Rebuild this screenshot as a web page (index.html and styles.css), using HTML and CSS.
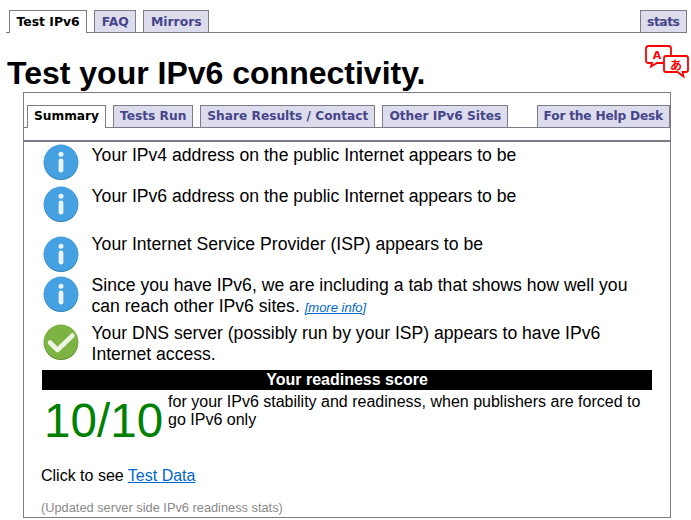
FILE: index.html
```html
<!DOCTYPE html>
<html lang="en">
<head>
<meta charset="utf-8">
<title>Test your IPv6 connectivity.</title>
<link rel="stylesheet" href="styles.css">
</head>
<body>
<svg class="defs" width="0" height="0" aria-hidden="true">
  <defs>
    <symbol id="info" viewBox="0 0 36 36">
      <circle cx="18" cy="18.6" r="17.4" fill="#2f7fb5"/>
      <circle cx="18" cy="17.8" r="17.2" fill="#45a1e2"/>
      <circle cx="18" cy="10.2" r="2.5" fill="#e8f3fb"/>
      <rect x="15.6" y="14.6" width="4.8" height="14" rx="2.4" fill="#e8f3fb"/>
    </symbol>
    <symbol id="check" viewBox="0 0 36 36">
      <circle cx="18" cy="18.6" r="17.4" fill="#5f8f2c"/>
      <circle cx="18" cy="17.8" r="17.2" fill="#7cb342"/>
      <path d="M7 18.5l7.5 7.5L29.5 11.5" fill="none" stroke="#eef5e4" stroke-width="4.6" stroke-linecap="round" stroke-linejoin="round"/>
    </symbol>
  </defs>
</svg>

<nav class="tabs tabs-top">
  <a class="tab active">Test IPv6</a>
  <a class="tab">FAQ</a>
  <a class="tab">Mirrors</a>
  <a class="tab tab-end">stats</a>
</nav>

<h1 class="title">Test your IPv6 connectivity.</h1>

<svg class="translate" viewBox="0 0 44 33" width="44" height="33" aria-hidden="true">
  <path d="M3.5 1h20q2.500 0 2.500 2.500v12q0 2.500-2.500 2.500H12l-6 3.500 1-3.500H3.500Q1 18 1 15.500v-12Q1 1 3.500 1z" fill="#fff" stroke="#f00" stroke-width="1.800"/>
  <path d="M21 11h20q2 0 2 2v12q0 2-2 2h-3.500l1 4.500-6-4.500H21q-2 0-2-2V13q0-2 2-2z" fill="#fff" stroke="#f00" stroke-width="1.800"/>
  <text x="12" y="13.500" class="glyph-a">A</text>
  <text x="31" y="24.500" class="glyph-b">あ</text>
</svg>

<main class="panel">
  <nav class="tabs tabs-inner">
    <a class="tab active">Summary</a>
    <a class="tab">Tests Run</a>
    <a class="tab">Share Results / Contact</a>
    <a class="tab">Other IPv6 Sites</a>
    <a class="tab tab-end">For the Help Desk</a>
  </nav>
  <div class="rule"></div>

  <section class="rows">
    <div class="row row-a"><svg class="icon"><use href="#info"/></svg><p>Your IPv4 address on the public Internet appears to be</p></div>
    <div class="row row-b"><svg class="icon"><use href="#info"/></svg><p>Your IPv6 address on the public Internet appears to be</p></div>
    <div class="row row-c"><svg class="icon"><use href="#info"/></svg><p>Your Internet Service Provider (ISP) appears to be</p></div>
    <div class="row row-d"><svg class="icon"><use href="#info"/></svg><p>Since you have IPv6, we are including a tab that shows how well you can reach other IPv6 sites. <a class="more">[more info]</a></p></div>
    <div class="row row-e"><svg class="icon"><use href="#check"/></svg><p>Your DNS server (possibly run by your ISP) appears to have IPv6 Internet access.</p></div>
  </section>

  <div class="score-head">Your readiness score</div>
  <div class="score">
    <div class="score-num">10/10</div>
    <p class="score-text">for your IPv6 stability and readiness, when publishers are forced to go IPv6 only</p>
  </div>

  <p class="click">Click to see <a class="link">Test Data</a></p>
  <p class="updated">(Updated server side IPv6 readiness stats)</p>
</main>
</body>
</html>
```
FILE: styles.css
```css
html, body {
  margin: 0;
  padding: 0;
  height: 520px;
  overflow: hidden;
  background: #fff;
  color: #000;
  font-family: "Liberation Sans", Arial, sans-serif;
}
.defs { position: absolute; }

.tabs {
  display: flex;
  align-items: flex-end;
  border-bottom: 1px solid #7b7b8a;
  font-family: "DejaVu Sans", Verdana, sans-serif;
  font-weight: bold;
}
.tabs-top {
  height: 22px;
  margin: 10px 4px 0 6px;
  padding-left: 3px;
  gap: 7px;
  font-size: 12.4px;
}
.tabs-inner {
  height: 22px;
  margin-top: 12px;
  padding-left: 3px;
  gap: 7px;
  font-size: 12.2px;
}
.tab {
  box-sizing: border-box;
  height: 23px;
  line-height: 21px;
  padding: 0 6px;
  background: #dddcec;
  border: 1px solid #7b7b8a;
  color: #45458a;
  white-space: nowrap;
  margin-bottom: -1px;
}
.tabs-top .tab {
  padding: 0 6.5px;
  line-height: 22px;
}
.tab.active {
  height: 23px;
  margin-bottom: -1px;
  background: #fff;
  border-bottom: 0;
  color: #000;
}
.tab-end {
  margin-left: auto;
  letter-spacing: -0.2px;
}
.tabs-top .tab-end { letter-spacing: -0.5px; }

.title {
  margin: 22px 0 0 7px;
  font-size: 32px;
  line-height: 37px;
  font-weight: bold;
}
.translate {
  position: absolute;
  left: 645px;
  top: 45px;
}
.glyph-a { font: bold 11px "DejaVu Sans", sans-serif; fill: #f00; text-anchor: middle; }
.glyph-b { font: bold 12px "Noto Sans CJK JP", sans-serif; fill: #f00; text-anchor: middle; }

.panel {
  box-sizing: border-box;
  width: 648px;
  height: 426px;
  margin: 0 0 0 23px;
  border: 1px solid #7b7b8a;
  overflow: hidden;
}
.rule {
  height: 2px;
  margin-top: 12px;
  background: #7b7b8a;
}
.rows { padding: 2px 0 0 19px; }
.row { display: flex; gap: 12.5px; }
.row p {
  margin: -1px 0 0;
  width: 560px;
  font-size: 17.6px;
  line-height: 21px;
}
.row-a { height: 42px; }
.row-a p { padding-top: 2px; }
.row-b { height: 50px; }
.row-b p { padding-top: 1px; }
.row-c { height: 40px; }
.row-c p { margin-top: -2px; }
.row-d { height: 48px; }
.row-e { height: 46px; }
.icon { width: 36px; height: 36px; flex: none; }
.more {
  font-size: 13px;
  font-style: italic;
  color: #0066cc;
  text-decoration: underline;
}

.score-head {
  margin: 0 18px;
  height: 20px;
  line-height: 20px;
  background: #000;
  color: #fff;
  font-size: 16px;
  font-weight: bold;
  text-align: center;
}
.score { display: flex; margin: 3px 17px 0 20px; gap: 5px; }
.score-num {
  color: #008000;
  font-size: 47.6px;
  line-height: 55px;
  flex: none;
}
.score-text {
  margin: 0;
  font-size: 16px;
  line-height: 18px;
}
.click {
  margin: 17px 0 0 17px;
  font-size: 16px;
  line-height: 21px;
}
.link { color: #0066cc; text-decoration: underline; }
.updated {
  margin: 14px 0 0 17px;
  font-size: 12.8px;
  line-height: 16px;
  color: #8a8a8a;
}
```
